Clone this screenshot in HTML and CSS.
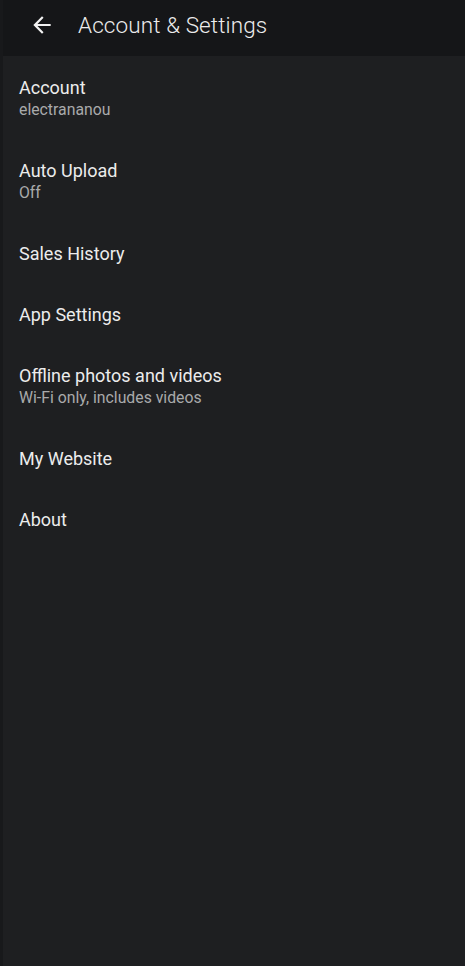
FILE: index.html
```html
<!DOCTYPE html>
<html>
<head>
	<title>Account &amp; Settings</title>
<link rel="stylesheet" href="styles.css">
</head>
<body>

<header class="topbar">
	<button class="back" type="button">
		<svg viewBox="0 0 24 24" width="26" height="26"><path d="M20 11H7.83l5.59-5.59L12 4l-8 8 8 8 1.41-1.41L7.83 13H20v-2z" fill="currentColor"/></svg>
	</button>
	<h1 class="title">Account &amp; Settings</h1>
</header>

<ul class="list">
	<li class="item">
		<div class="item-title">Account</div>
		<div class="item-sub">electrananou</div>
	</li>
	<li class="item">
		<div class="item-title">Auto Upload</div>
		<div class="item-sub">Off</div>
	</li>
	<li class="item">
		<div class="item-title">Sales History</div>
	</li>
	<li class="item">
		<div class="item-title">App Settings</div>
	</li>
	<li class="item">
		<div class="item-title">Offline photos and videos</div>
		<div class="item-sub">Wi-Fi only, includes videos</div>
	</li>
	<li class="item">
		<div class="item-title">My Website</div>
	</li>
	<li class="item">
		<div class="item-title">About</div>
	</li>
</ul>

</body>
</html>
```

FILE: styles.css
```css
*{box-sizing: border-box;margin: 0;padding: 0;}

html,body{height: 100%;}
body{background: #1e1f21;font-family: Roboto, "Liberation Sans", sans-serif;color: #ececec;border-left: 3px solid #18191b;}

.topbar{height: 56px;background: #151618;display: flex;align-items: center;margin-left: -3px;padding-left: 29px;padding-bottom: 6px;}
.back{background: none;border: none;color: #f2f2f2;display: flex;width: 26px;height: 26px;}
.title{font-size: 22.5px;font-weight: 300;color: #ececec;margin-left: 23px;letter-spacing: 0.1px;}

.list{list-style: none;padding-top: 1px;}
.item{padding: 19px 16px 19px 16px;}
.item-title{font-size: 18px;line-height: 23px;color: #ececec;}
.item-sub{font-size: 15.8px;line-height: 22px;color: #a9aaab;}
```
